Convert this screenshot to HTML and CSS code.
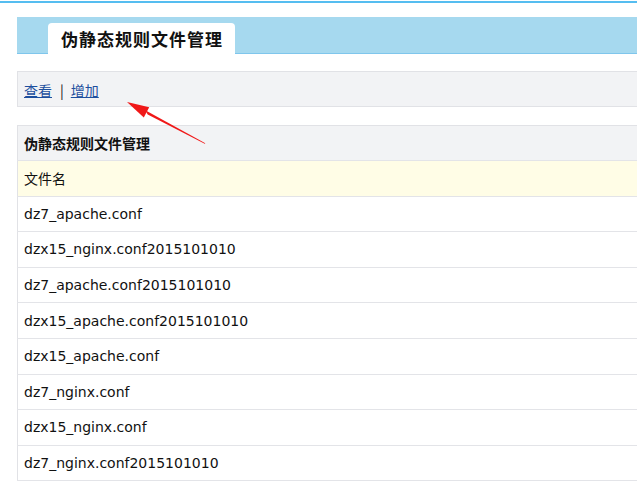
FILE: index.html
```html
<!DOCTYPE html>
<html lang="zh-CN">
<head>
    <meta charset="UTF-8">
    <title>伪静态规则文件管理</title>
    <link rel="stylesheet" href="styles.css">
</head>
<body>
    <div class="topline"></div>

    <div class="main">
        <div class="tabbar">
            <div class="tab">伪静态规则文件管理</div>
        </div>

        <div class="toolbar">
            <a href="#">查看</a><span class="sep">|</span><a href="#">增加</a>
        </div>

        <table class="list">
            <tr class="list-title"><th>伪静态规则文件管理</th></tr>
            <tr class="list-head"><td>文件名</td></tr>
            <tr><td>dz7_apache.conf</td></tr>
            <tr><td>dzx15_nginx.conf2015101010</td></tr>
            <tr><td>dz7_apache.conf2015101010</td></tr>
            <tr><td>dzx15_apache.conf2015101010</td></tr>
            <tr><td>dzx15_apache.conf</td></tr>
            <tr><td>dz7_nginx.conf</td></tr>
            <tr><td>dzx15_nginx.conf</td></tr>
            <tr><td>dz7_nginx.conf2015101010</td></tr>
        </table>
    </div>

    <!-- 标注箭头 -->
    <svg class="mark" width="637" height="482" viewBox="0 0 637 482">
        <polygon points="205.3,143.2 145.3,110.3 147.7,114.5 204.7,143.8" fill="#f01818"/>
        <polygon points="127,102 143.8,117.4 149.2,107.2" fill="#f01818"/>
    </svg>
</body>
</html>
```

FILE: styles.css
```css
* {
    margin: 0;
    padding: 0;
    box-sizing: border-box;
}

body {
    background-color: #fff;
    color: #111;
    font-family: "DejaVu Sans", Verdana, "Noto Sans CJK SC", sans-serif;
    font-size: 14px;
    overflow: hidden;
}

.topline {
    margin-top: 1px;
    height: 2px;
    background-color: #55bdf0;
}

.main {
    padding-left: 17px;
}

.tabbar {
    margin-top: 14px;
    height: 37px;
    background-color: #a6d9ef;
    border-bottom: 1px solid #7fc6ec;
    display: flex;
    align-items: flex-end;
    padding-left: 31px;
}

.tab {
    height: 31px;
    margin-bottom: -1px;
    padding: 0 12px 0 13px;
    background-color: #fff;
    border-radius: 4px 4px 0 0;
    font-family: "Noto Sans CJK SC", sans-serif;
    font-size: 17px;
    font-weight: bold;
    letter-spacing: 1px;
    line-height: 31px;
    color: #111;
}

.toolbar {
    margin-top: 17px;
    height: 36px;
    background-color: #f2f3f5;
    border: 1px solid #e1e2e6;
    border-right: none;
    padding-left: 6px;
    display: flex;
    align-items: center;
    font-family: "Noto Sans CJK SC", sans-serif;
    font-size: 14px;
    padding-top: 2px;
}

.toolbar a {
    color: #1d4f9e;
    text-decoration: underline;
}

.toolbar .sep {
    margin: 0 7px 0 8px;
    color: #111;
}

.list {
    margin-top: 18px;
    width: 100%;
    border-collapse: collapse;
    border-left: 1px solid #e1e2e6;
}

.list th,
.list td {
    text-align: left;
    padding: 0 6px;
    height: 35.6px;
    border-bottom: 1px solid #e3e4e8;
    border-top: none;
}

.list-title th {
    height: 35px;
    background-color: #f2f3f5;
    border-top: 1px solid #e1e2e6;
    font-family: "Noto Sans CJK SC", sans-serif;
    font-size: 14px;
    font-weight: bold;
}

.list-head td {
    background-color: #fffde6;
    font-family: "Noto Sans CJK SC", sans-serif;
}

.mark {
    position: absolute;
    left: 0;
    top: 0;
    pointer-events: none;
}
```
